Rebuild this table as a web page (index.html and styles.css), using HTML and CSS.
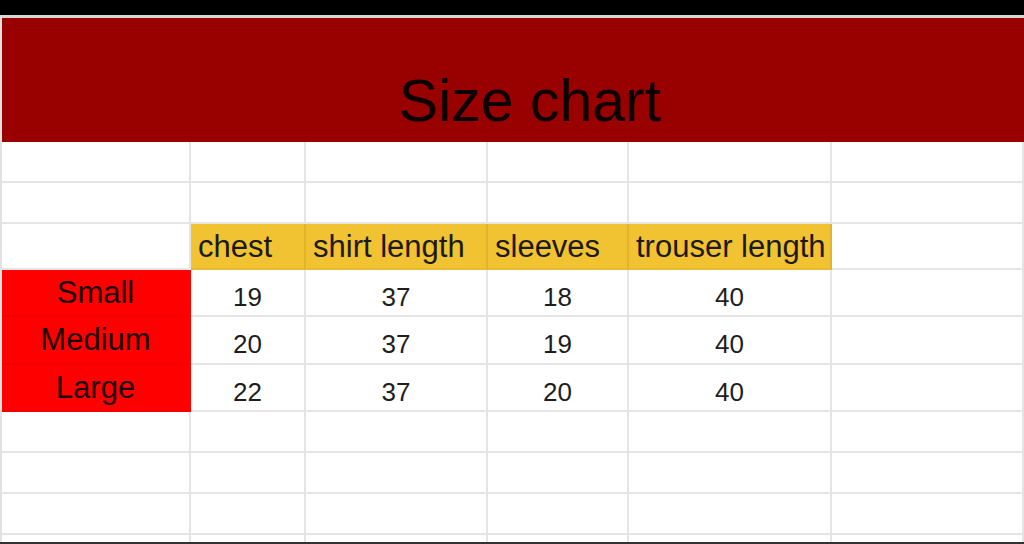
FILE: index.html
```html
<!DOCTYPE html>
<html lang="en">
<head>
<meta charset="utf-8">
<title>Size chart</title>
<link rel="stylesheet" href="styles.css">
</head>
<body>
<div class="topbar"></div>
<div class="sheet">
  <div class="title">Size chart</div>

  <div class="cell"></div><div class="cell"></div><div class="cell"></div><div class="cell"></div><div class="cell"></div><div class="cell"></div>
  <div class="cell"></div><div class="cell"></div><div class="cell"></div><div class="cell"></div><div class="cell"></div><div class="cell"></div>

  <div class="cell"></div>
  <div class="cell hdr">chest</div>
  <div class="cell hdr">shirt length</div>
  <div class="cell hdr">sleeves</div>
  <div class="cell hdr">trouser length</div>
  <div class="cell"></div>

  <div class="cell size">Small</div>
  <div class="cell num">19</div>
  <div class="cell num">37</div>
  <div class="cell num">18</div>
  <div class="cell num">40</div>
  <div class="cell"></div>

  <div class="cell size">Medium</div>
  <div class="cell num">20</div>
  <div class="cell num">37</div>
  <div class="cell num">19</div>
  <div class="cell num">40</div>
  <div class="cell"></div>

  <div class="cell size">Large</div>
  <div class="cell num">22</div>
  <div class="cell num">37</div>
  <div class="cell num">20</div>
  <div class="cell num">40</div>
  <div class="cell"></div>

  <div class="cell"></div><div class="cell"></div><div class="cell"></div><div class="cell"></div><div class="cell"></div><div class="cell"></div>
  <div class="cell"></div><div class="cell"></div><div class="cell"></div><div class="cell"></div><div class="cell"></div><div class="cell"></div>
  <div class="cell"></div><div class="cell"></div><div class="cell"></div><div class="cell"></div><div class="cell"></div><div class="cell"></div>
  <div class="cell last"></div><div class="cell last"></div><div class="cell last"></div><div class="cell last"></div><div class="cell last"></div><div class="cell last"></div>
</div>
<div class="bottombar"></div>
</body>
</html>
```

FILE: styles.css
```css
* { box-sizing: border-box; }

html, body {
  margin: 0;
  padding: 0;
  background: #ffffff;
  width: 1024px;
  height: 544px;
  overflow: hidden;
  font-family: "Liberation Sans", Arial, sans-serif;
}

.topbar {
  height: 15px;
  background: #000000;
}

.sheet {
  display: grid;
  grid-template-columns: 189px 115px 182px 141px 203px 1fr;
  grid-template-rows: 124px 41px 41px 46px 47px 48px 47px 41px 41px 41px 7px;
  height: 527px;
  border-top: 3px solid #d6d6d6;
  border-left: 2px solid #e2e2e2;
}

.title {
  grid-column: 1 / -1;
  background: #990000;
  color: #0c0000;
  font-size: 59px;
  line-height: 59px;
  text-align: center;
  padding-top: 54px;
  padding-left: 34px;
}

.cell {
  border-right: 2px solid rgba(0, 0, 0, 0.1);
  border-bottom: 2px solid rgba(0, 0, 0, 0.1);
  color: #1e1e1e;
  white-space: nowrap;
  overflow: hidden;
}

.cell.last {
  border-bottom: none;
}

.hdr {
  background: #f1c232;
  color: #1c1a10;
  font-size: 31px;
  line-height: 45px;
  padding-left: 7px;
  border-bottom-color: rgba(0, 0, 0, 0.04);
  border-right-color: rgba(0, 0, 0, 0.06);
}

.size {
  background: #ff0000;
  color: #1a0000;
  font-size: 31px;
  line-height: 45px;
  text-align: center;
  border-right-color: transparent;
  border-bottom-color: rgba(0, 0, 0, 0.05);
}

.num {
  font-size: 26px;
  line-height: 26px;
  padding-top: 14px;
  text-align: center;
}

.bottombar {
  height: 2px;
  background: #333333;
}
```
